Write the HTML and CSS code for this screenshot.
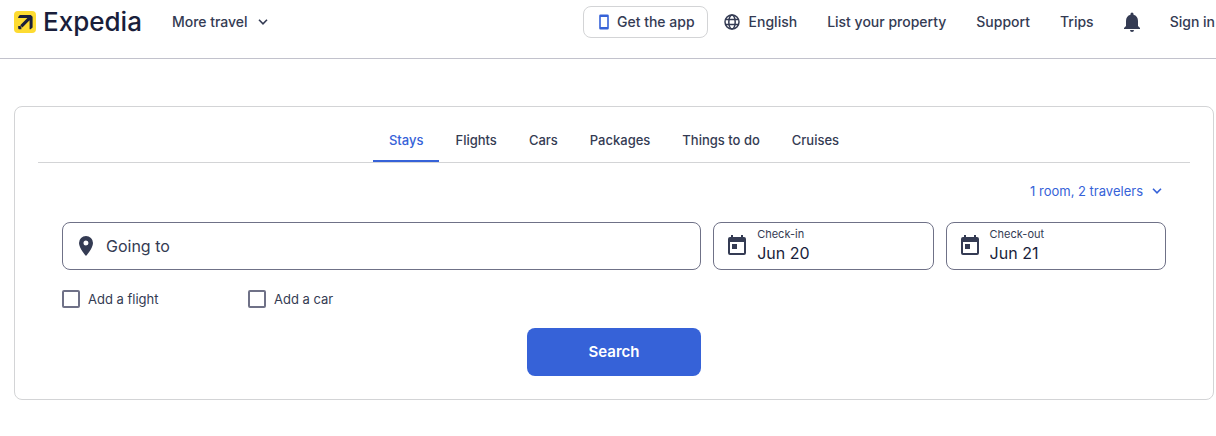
FILE: index.html
```html
<!DOCTYPE html>
<html lang="en">
<head>
    <meta charset="UTF-8">
    <meta name="viewport" content="width=device-width, initial-scale=1.0">
    <title>Expedia Travel</title>
    <link rel="stylesheet" href="styles.css">
</head>
<body>
    <header class="site-header">
        <a href="#" class="logo">
            <svg class="logo-mark" viewBox="0 0 22 22" width="22" height="22" aria-hidden="true">
                <rect width="22" height="22" rx="4" fill="#fddb32"/>
                <path d="M5.800 4h11l1.800 1.800v10.800l-2 1.600h-1V9.300L8.400 16.500 6.200 14.300l7.200-7.200H4.200V6z" fill="#191e3b"/>
                <path d="M4.200 15h2.200l1 1v2.200H4.800l-.6-.6z" fill="#191e3b"/>
            </svg>
            <span class="logo-text">Expedia</span>
        </a>
        <button type="button" class="more-travel">
            More travel
            <svg viewBox="0 0 10 6" width="10" height="6" aria-hidden="true"><path d="M1 .8l4 4 4-4" fill="none" stroke="currentColor" stroke-width="1.6"/></svg>
        </button>
        <nav class="site-nav">
            <a href="#" class="get-app">
                <svg viewBox="0 0 10 16" width="10" height="16" aria-hidden="true"><path fill-rule="evenodd" d="M1.500 .5h7a1.300 1.300 0 0 1 1.300 1.300v12.400a1.300 1.300 0 0 1-1.300 1.300h-7a1.300 1.300 0 0 1-1.300-1.300V1.800A1.300 1.300 0 0 1 1.500 .5zM1.800 3v10h6.400V3z" fill="#3662d8"/></svg>
                Get the app
            </a>
            <button type="button" class="nav-item language">
                <svg viewBox="0 0 16 16" width="16" height="16" aria-hidden="true">
                    <g fill="none" stroke="currentColor" stroke-width="1.500">
                        <circle cx="8" cy="8" r="7"/>
                        <ellipse cx="8" cy="8" rx="3.200" ry="7"/>
                        <path d="M1.600 5.500h12.800M1.600 10.500h12.800"/>
                    </g>
                </svg>
                English
            </button>
            <a href="#" class="nav-item">List your property</a>
            <a href="#" class="nav-item">Support</a>
            <a href="#" class="nav-item">Trips</a>
            <button type="button" class="nav-item" aria-label="Notifications">
                <svg viewBox="0 0 16 20" width="16" height="20" aria-hidden="true"><path d="M8 20a2 2 0 0 0 2-2H6a2 2 0 0 0 2 2zm6-6V9c0-3.100-1.600-5.600-4.500-6.300V2a1.500 1.500 0 0 0-3 0v.7C3.600 3.400 2 5.900 2 9v5l-2 2v1h16v-1z" fill="currentColor"/></svg>
            </button>
            <button type="button" class="nav-item">Sign in</button>
        </nav>
    </header>

    <main class="search-card">
        <div class="tabs" role="tablist">
            <button type="button" class="tab active" role="tab" aria-selected="true">Stays</button>
            <button type="button" class="tab" role="tab">Flights</button>
            <button type="button" class="tab" role="tab">Cars</button>
            <button type="button" class="tab" role="tab">Packages</button>
            <button type="button" class="tab" role="tab">Things to do</button>
            <button type="button" class="tab" role="tab">Cruises</button>
        </div>

        <form class="search-form">
            <button type="button" class="travelers">
                1 room, 2 travelers
                <svg viewBox="0 0 10 6" width="10" height="6" aria-hidden="true"><path d="M1 .8l4 4 4-4" fill="none" stroke="currentColor" stroke-width="1.6"/></svg>
            </button>

            <div class="fields">
                <div class="field">
                    <svg class="field-icon" viewBox="0 0 24 24" width="24" height="24" aria-hidden="true"><path d="M12 2a7 7 0 0 0-7 7c0 5.250 7 13 7 13s7-7.750 7-13a7 7 0 0 0-7-7zm0 9.500a2.500 2.500 0 1 1 0-5 2.500 2.500 0 0 1 0 5z" fill="currentColor"/></svg>
                    <input type="text" class="field-input" placeholder="Going to" aria-label="Going to">
                </div>
                <div class="field">
                    <svg class="field-icon" viewBox="0 0 24 24" width="24" height="24" aria-hidden="true"><path d="M19 3h-1V1h-2v2H8V1H6v2H5a2 2 0 0 0-2 2v14a2 2 0 0 0 2 2h14a2 2 0 0 0 2-2V5a2 2 0 0 0-2-2zm0 16H5V8h14zM7 10h5v5H7z" fill="currentColor"/></svg>
                    <div class="field-text">
                        <label for="checkIn" class="field-label">Check-in</label>
                        <input type="text" id="checkIn" class="field-input" value="Jun 20" readonly>
                    </div>
                </div>
                <div class="field">
                    <svg class="field-icon" viewBox="0 0 24 24" width="24" height="24" aria-hidden="true"><path d="M19 3h-1V1h-2v2H8V1H6v2H5a2 2 0 0 0-2 2v14a2 2 0 0 0 2 2h14a2 2 0 0 0 2-2V5a2 2 0 0 0-2-2zm0 16H5V8h14zM7 10h5v5H7z" fill="currentColor"/></svg>
                    <div class="field-text">
                        <label for="checkOut" class="field-label">Check-out</label>
                        <input type="text" id="checkOut" class="field-input" value="Jun 21" readonly>
                    </div>
                </div>
            </div>

            <div class="extras">
                <label class="extra"><input type="checkbox" class="checkbox">Add a flight</label>
                <label class="extra"><input type="checkbox" class="checkbox">Add a car</label>
            </div>

            <button type="submit" class="search-button">Search</button>
        </form>
    </main>
</body>
</html>
```
FILE: styles.css
```css
* {
    box-sizing: border-box;
}

body {
    font-family: Inter, 'Liberation Sans', sans-serif;
    font-size: 13px;
    line-height: 20px;
    margin: 0;
    color: #343b53;
    background-color: #fff;
}

button, input {
    font: inherit;
    color: inherit;
    padding: 0;
    border: none;
    background: none;
}

button {
    cursor: pointer;
}

a {
    color: inherit;
    text-decoration: none;
}

svg {
    display: block;
    flex: none;
}

/* Header */
.site-header {
    display: flex;
    align-items: center;
    padding: 6px 1px 20px 14px;
    border-bottom: 1px solid #c2c2cc;
    font-size: 14px;
    font-weight: 500;
}

.logo {
    display: flex;
    align-items: center;
    gap: 7px;
    color: #191e3b;
}

.logo-text {
    font-size: 26px;
    line-height: 32px;
}

.more-travel {
    display: flex;
    align-items: center;
    gap: 10px;
    margin-left: 30px;
}

.site-nav {
    display: flex;
    align-items: center;
    gap: 30px;
    margin-left: auto;
}

.nav-item {
    white-space: nowrap;
}

.get-app {
    display: flex;
    align-items: center;
    gap: 8px;
    height: 32px;
    padding: 0 12px 0 15px;
    margin-right: -14px;
    border: 1px solid #d3d4d6;
    border-radius: 8px;
}

.language {
    display: flex;
    align-items: center;
    gap: 9px;
}

/* Search card */
.search-card {
    margin: 47px 2px 0 14px;
    padding: 12px 23px 23px;
    border: 1px solid #d3d4d6;
    border-radius: 8px;
}

.tabs {
    display: flex;
    justify-content: center;
    border-bottom: 1px solid #d3d4d6;
}

.tab {
    height: 43px;
    padding: 0 16px;
    border-bottom: 2px solid transparent;
    font-weight: 500;
}

.tab.active {
    color: #3662d8;
    border-bottom-color: #3662d8;
}

.search-form {
    padding: 18px 24px 0;
}

.travelers {
    display: flex;
    align-items: center;
    gap: 9px;
    margin: 0 4px 21px auto;
    color: #3662d8;
}

.fields {
    display: grid;
    grid-template-columns: 29fr 10fr 10fr;
    gap: 12px;
}

.field {
    display: flex;
    align-items: center;
    gap: 8px;
    height: 48px;
    padding: 0 11px;
    border: 1px solid #6f7187;
    border-radius: 8px;
}

.field-text {
    display: flex;
    flex-direction: column;
    flex: 1;
    min-width: 0;
    padding-bottom: 2px;
}

.field-label {
    font-size: 11px;
    line-height: 16px;
}

.field-input {
    width: 100%;
    height: 22px;
    font-size: 16px;
    color: #191e3b;
    outline: none;
}

.field-input::placeholder {
    color: #343b53;
    opacity: 1;
}

.extras {
    display: grid;
    grid-template-columns: repeat(6, 1fr);
    gap: 12px;
    margin-top: 19px;
}

.extra {
    display: flex;
    align-items: center;
    gap: 8px;
    white-space: nowrap;
}

.checkbox {
    appearance: none;
    width: 18px;
    height: 18px;
    margin: 0;
    border: 2px solid #6f7187;
    border-radius: 2px;
}

.checkbox:checked {
    background-color: #3662d8;
    border-color: #3662d8;
}

.search-button {
    display: block;
    width: 174px;
    height: 48px;
    margin: 19px auto 0;
    border-radius: 8px;
    background-color: #3662d8;
    color: #fff;
    font-size: 15px;
    font-weight: 600;
}
```
